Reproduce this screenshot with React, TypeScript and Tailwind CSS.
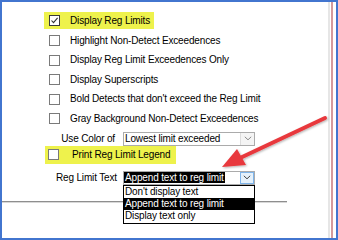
import React from "react";

const Box = ({ checked = false }: { checked?: boolean }) => (
  <div
    className={`w-[11px] h-[11px] shrink-0 border bg-white flex items-center justify-center ${
      checked ? "border-[#3a3a3a] bg-transparent" : "border-[#7a7a7a]"
    }`}
  >
    {checked && (
      <svg width="9" height="9" viewBox="0 0 9 9">
        <polyline points="1.5,4.5 3.5,6.7 7.6,1.8" fill="none" stroke="#333" strokeWidth="1.1" />
      </svg>
    )}
  </div>
);

const Chevron = ({ color = "#8a8a8a" }: { color?: string }) => (
  <svg width="8" height="5" viewBox="0 0 8 5">
    <polyline points="0.8,0.8 4,3.8 7.2,0.8" fill="none" stroke={color} strokeWidth="1" />
  </svg>
);

const Row = ({ label }: { label: string }) => (
  <div className="h-[19.6px] flex items-center pl-[5px]">
    <Box />
    <span className="ml-[10px]">{label}</span>
  </div>
);

export default function App() {
  return (
    <div
      className="w-[338px] h-[240px] border-2 border-[#4275cf] bg-white relative overflow-hidden flex text-black text-[10px] leading-none tracking-[-0.15px]"
      style={{ fontFamily: '"Liberation Sans", Arial, sans-serif' }}
    >
      <div className="w-[326px] flex flex-col">
        <div className="h-[199px] pt-[9.2px] pl-[42px] flex flex-col">
          <div className="h-[19.6px] flex items-center">
            <div className="h-[17px] bg-[#eef24c] flex items-center pl-[5px] pr-[4px]">
              <Box checked />
              <span className="ml-[10px]">Display Reg Limits</span>
            </div>
          </div>
          <Row label="Highlight Non-Detect Exceedences" />
          <Row label="Display Reg Limit Exceedences Only" />
          <Row label="Display Superscripts" />
          <Row label="Bold Detects that don't exceed the Reg Limit" />
          <Row label="Gray Background Non-Detect Exceedences" />

          <div className="mt-[3px] h-[14px] flex items-center">
            <div className="w-[79px] pr-[8px] text-right">Use Color of</div>
            <div className="w-[132px] h-[14px] border border-[#ababab] bg-white flex">
              <div className="flex-1 flex items-center pl-[1px]">Lowest limit exceeded</div>
              <div className="w-[14px] border-l border-[#dcdcdc] bg-[#f4f4f4] flex items-center justify-center">
                <Chevron />
              </div>
            </div>
          </div>

          <div className="h-[18px] flex items-center">
            <div className="ml-[1px] h-[18px] w-[131px] bg-[#eef24c] flex items-center pl-[3px]">
              <Box />
              <span className="ml-[13px]">Print Reg Limit Legend</span>
            </div>
          </div>

          <div className="mt-[7px] h-[14px] flex items-center">
            <div className="w-[79px] pr-[6px] text-right">Reg Limit Text</div>
            <div className="relative w-[132px] h-[14px]">
              <div className="w-full h-full border border-[#ababab] bg-white flex">
                <div className="flex-1 flex items-center">
                  <span className="bg-black text-white h-[11px] flex items-center pl-[1px] pr-[1px]">
                    Append text to reg limit
                  </span>
                </div>
                <div className="w-[14px] border border-[#7eb4ea] bg-[#e5f1fb] flex items-center justify-center">
                  <Chevron color="#444" />
                </div>
              </div>
              <div className="absolute top-full left-0 w-[132px] border border-black bg-white flex flex-col">
                <div className="h-[12.3px] flex items-center pl-[1px]">Don't display text</div>
                <div className="h-[12.3px] flex items-center pl-[1px] bg-black text-white">
                  Append text to reg limit
                </div>
                <div className="h-[12.3px] flex items-center pl-[1px]">Display text only</div>
              </div>
            </div>
          </div>
        </div>
        <div className="w-[285px] border-t border-[#8e8e8e]" />
        <div className="w-[285px] border-t border-[#d8d8d8]" />
      </div>
      <div className="w-[8px] h-full border-l-2 border-[#e6e6e6] pl-[1px]">
        <div className="w-[2px] h-full bg-[#d4999b]" />
      </div>

      <svg className="absolute left-[-2px] top-[-2px] pointer-events-none" width="338" height="240" viewBox="0 0 338 240">
        <defs>
          <filter id="sh" x="-20%" y="-20%" width="140%" height="140%">
            <feDropShadow dx="1" dy="1" stdDeviation="0.8" floodColor="#000" floodOpacity="0.3" />
          </filter>
        </defs>
        <g filter="url(#sh)">
          <line x1="325" y1="118" x2="240" y2="158" stroke="#e8393c" strokeWidth="4" strokeLinecap="round" />
          <polygon points="222,167 237,149 246,165" fill="#e8393c" />
        </g>
      </svg>
    </div>
  );
}
